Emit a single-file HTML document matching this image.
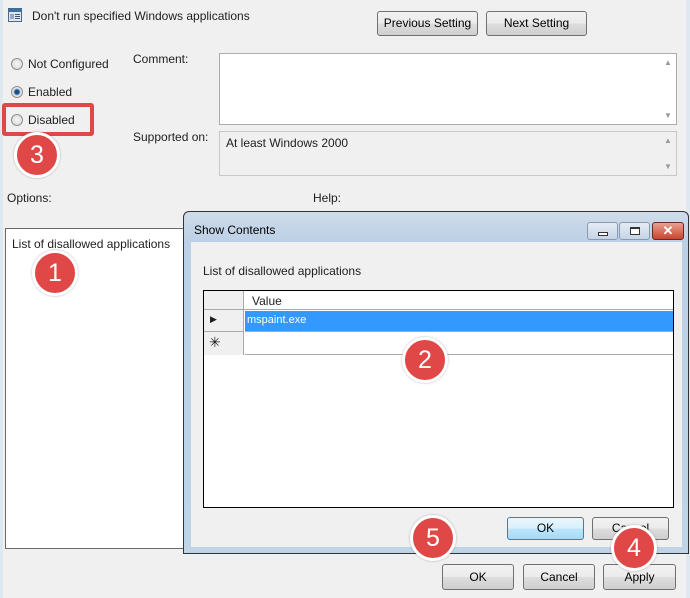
<!DOCTYPE html>
<html><head><style>
*{box-sizing:border-box;margin:0;padding:0}
body{width:690px;height:598px;overflow:hidden;background:#f0f0f0;font-family:"Liberation Sans",sans-serif;font-size:12px;color:#1e1e1e;position:relative}
.a{position:absolute}
.btn{position:absolute;border:1px solid #707070;border-radius:3px;background:linear-gradient(#f2f2f2,#ebebeb 50%,#dddddd 51%,#cfcfcf);text-align:center;font-size:12px;color:#000}
.radio{position:absolute;width:12px;height:12px;border-radius:50%;border:1px solid #8e8f8f;background:radial-gradient(#f4f4f4,#d8d8d8)}
.circ{position:absolute;width:46px;height:46px;border-radius:50%;background:#e04848;border:3px solid #fff;color:#fff;font-size:25px;text-align:center;line-height:40px;box-shadow:0 0 2px rgba(0,0,0,.3)}
.sb{position:absolute;right:0;top:0;bottom:0;width:16px;color:#999;font-size:8px;text-align:center}
</style></head><body>
<div class="a" style="left:0;top:0;width:3px;height:598px;background:#dfe7f0"></div>
<div class="a" style="left:686px;top:0;width:4px;height:598px;background:#dfe7f0"></div>
<!-- icon -->
<svg class="a" style="left:8px;top:8px" width="14" height="14"><rect x="0.5" y="0.5" width="13" height="13" fill="#dfe8f2" stroke="#4a6a8a"/><rect x="1" y="1" width="12" height="3" fill="#3b6fa5"/><rect x="2" y="6" width="4" height="5" fill="#9ab"/><rect x="7" y="6" width="5" height="1" fill="#456"/><rect x="7" y="8" width="5" height="1" fill="#456"/><rect x="7" y="10" width="5" height="1" fill="#456"/></svg>
<div class="a" style="left:32px;top:9px">Don't run specified Windows applications</div>
<div class="btn" style="left:377px;top:11px;width:101px;height:25px;line-height:23px">Previous Setting</div>
<div class="btn" style="left:486px;top:11px;width:101px;height:25px;line-height:23px">Next Setting</div>
<div class="radio" style="left:11px;top:58px"></div><div class="a" style="left:28px;top:57px">Not Configured</div>
<div class="radio" style="left:11px;top:86px;background:radial-gradient(#1c4f8a 30%,#6fa0d0 40%,#e8e8e8 55%)"></div><div class="a" style="left:28px;top:85px">Enabled</div>
<div class="radio" style="left:11px;top:114px"></div><div class="a" style="left:28px;top:113px">Disabled</div>
<div class="a" style="left:2px;top:103px;width:92px;height:33px;border:4px solid #e04848;border-radius:3px"></div>
<div class="a" style="left:133px;top:52px">Comment:</div>
<div class="a" style="left:133px;top:130px">Supported on:</div>
<div class="a" style="left:219px;top:53px;width:458px;height:72px;background:#fff;border:1px solid #abadb3"><div class="sb"><div style="margin-top:4px">▲</div><div style="position:absolute;bottom:4px;width:16px">▼</div></div></div>
<div class="a" style="left:219px;top:131px;width:458px;height:45px;background:#f0f0f0;border:1px solid #c8c8c8;padding:4px 6px">At least Windows 2000<div class="sb"><div style="margin-top:4px">▲</div><div style="position:absolute;bottom:4px;width:16px">▼</div></div></div>
<div class="a" style="left:7px;top:191px">Options:</div>
<div class="a" style="left:313px;top:191px">Help:</div>
<div class="a" style="left:5px;top:228px;width:190px;height:321px;background:#fff;border:1px solid #6a6a6a;padding:8px 6px">List of disallowed applications</div>
<div class="a" style="left:300px;top:228px;width:380px;height:10px;background:#fff;border:1px solid #6a6a6a"></div>
<!-- dialog -->
<div class="a" style="left:183px;top:211px;width:506px;height:343px;background:linear-gradient(#cfdcea,#bcd0e5 30px,#c0d4e8);border:1px solid #333;border-radius:6px 6px 0 0">
<div class="a" style="left:10px;top:11px;font-size:12px;color:#000">Show Contents</div>
<div class="a" style="left:403px;top:10px;width:31px;height:18px;border:1px solid #8a9ab0;border-radius:3px;background:linear-gradient(#e4ecf5,#c5d4e6)"><div style="margin:9px auto 0;width:10px;height:4px;border:1px solid #333;background:#fff"></div></div>
<div class="a" style="left:435px;top:10px;width:31px;height:18px;border:1px solid #8a9ab0;border-radius:3px;background:linear-gradient(#e4ecf5,#c5d4e6)"><div style="margin:4px auto 0;width:10px;height:8px;border:1px solid #333;border-top-width:2px;background:#fff"></div></div>
<div class="a" style="left:468px;top:10px;width:32px;height:18px;border:1px solid #6b2a20;border-radius:3px;background:linear-gradient(#e8a090,#c8452e);color:#fff;font-weight:bold;text-align:center;line-height:16px;font-size:13px">✕</div>
<div class="a" style="left:7px;top:30px;width:491px;height:305px;background:#f0f0f0">
<div class="a" style="left:12px;top:22px">List of disallowed applications</div>
<div class="a" style="left:12px;top:48px;width:471px;height:218px;background:#fff;border:1px solid #000">
<div class="a" style="left:0;top:0;width:40px;height:64px;background:#f0f0f0;border-right:1px solid #aaa"></div>
<div class="a" style="left:0;top:0;width:469px;height:19px;border-bottom:1px solid #aaa;background:#fff"></div>
<div class="a" style="left:0;top:0;width:40px;height:19px;background:#f0f0f0;border-right:1px solid #aaa;border-bottom:1px solid #aaa"></div>
<div class="a" style="left:48px;top:3px">Value</div>
<div class="a" style="left:41px;top:20px;width:428px;height:21px;background:#3399ff;color:#fff;padding:3px 2px;border-bottom:1px solid #aaa;font-size:11px">mspaint.exe</div>
<div class="a" style="left:0;top:20px;width:40px;height:21px;border-bottom:1px solid #aaa;padding:3px 6px;font-size:9px">▶</div>
<div class="a" style="left:41px;top:41px;width:428px;height:23px;border-bottom:1px solid #aaa;background:#fff"></div>
<div class="a" style="left:5px;top:43px;font-size:14px">✳</div>
</div>
<div class="btn" style="left:316px;top:275px;width:77px;height:23px;line-height:21px;border-color:#3c7fb1;background:linear-gradient(#eaf6fd,#d9f0fc 50%,#bee6fd 51%,#a7d9f5)">OK</div>
<div class="btn" style="left:401px;top:275px;width:77px;height:23px;line-height:21px">Cancel</div>
</div>
</div>
<div class="btn" style="left:442px;top:564px;width:72px;height:26px;line-height:24px">OK</div>
<div class="btn" style="left:523px;top:564px;width:72px;height:26px;line-height:24px">Cancel</div>
<div class="btn" style="left:603px;top:564px;width:73px;height:26px;line-height:24px">Apply</div>
<div class="circ" style="left:32px;top:250px">1</div>
<div class="circ" style="left:402px;top:337px">2</div>
<div class="circ" style="left:14px;top:132px">3</div>
<div class="circ" style="left:611px;top:525px">4</div>
<div class="circ" style="left:410px;top:515px">5</div>
</body></html>
